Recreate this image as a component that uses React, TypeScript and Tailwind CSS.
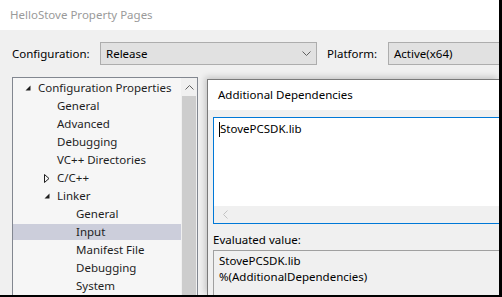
import React from 'react';

type Node = { label: string; level: number; toggle?: 'open' | 'closed'; selected?: boolean };

const nodes: Node[] = [
  { label: 'Configuration Properties', level: 0, toggle: 'open' },
  { label: 'General', level: 1 },
  { label: 'Advanced', level: 1 },
  { label: 'Debugging', level: 1 },
  { label: 'VC++ Directories', level: 1 },
  { label: 'C/C++', level: 1, toggle: 'closed' },
  { label: 'Linker', level: 1, toggle: 'open' },
  { label: 'General', level: 2 },
  { label: 'Input', level: 2, selected: true },
  { label: 'Manifest File', level: 2 },
  { label: 'Debugging', level: 2 },
  { label: 'System', level: 2 },
];

const indent = ['pl-[12px]', 'pl-[31px]', 'pl-[50px]'];

const Chevron = ({ className }: { className?: string }) => (
  <svg width="9" height="5" viewBox="0 0 9 5" className={className}>
    <path d="M0.5 0.5 L4.5 4.5 L8.5 0.5" fill="none" stroke="currentColor" strokeWidth="1" />
  </svg>
);

const TreeRow = ({ node }: { node: Node }) => (
  <div className="h-[18px] py-px">
    <div className={`h-[16px] flex items-center ${indent[node.level]} ${node.selected ? 'bg-[#cccedb]' : ''}`}>
      <span className="w-[13px] shrink-0 flex items-center">
        {node.toggle === 'open' && (
          <svg width="6" height="6" viewBox="0 0 6 6">
            <path d="M5.5 0.5 L5.5 5.5 L0.5 5.5 Z" fill="#1e1e1e" />
          </svg>
        )}
        {node.toggle === 'closed' && (
          <svg width="6" height="9" viewBox="0 0 6 9">
            <path d="M0.5 0.5 L5 4.5 L0.5 8.5 Z" fill="none" stroke="#1e1e1e" strokeWidth="1" />
          </svg>
        )}
      </span>
      <span className="text-[11.5px] text-[#1e1e1e] whitespace-nowrap">{node.label}</span>
    </div>
  </div>
);

export default function App() {
  return (
    <div
      className="w-[502px] h-[297px] overflow-hidden flex flex-col bg-[#f0f0f0] border-r-[3px] border-b-2 border-black"
      style={{ fontFamily: '"Noto Sans", "Open Sans", sans-serif' }}
    >
      {/* Title bar */}
      <div className="h-[30px] shrink-0 bg-white flex items-center pl-[10px]">
        <span className="text-[11.5px] text-[#9a9a9a]">HelloStove Property Pages</span>
      </div>

      {/* Configuration / Platform */}
      <div className="shrink-0 flex items-start pt-[12px] pl-[12px] h-[47px]">
        <span className="w-[88px] text-[11.5px] text-black leading-[23px]">Configuration:</span>
        <div className="w-[217px] h-[23px] flex items-center border border-[#adadad] bg-[#e1e1e1] pl-[5px] pr-[5px]">
          <span className="flex-1 text-[11.5px] text-black">Release</span>
          <Chevron className="text-[#606060]" />
        </div>
        <span className="ml-[10px] w-[61px] text-[11.5px] text-black leading-[23px]">Platform:</span>
        <div className="flex-1 h-[23px] flex items-center border border-[#adadad] bg-[#e1e1e1] pl-[5px] mr-[-4px]">
          <span className="text-[11.5px] text-black">Active(x64)</span>
        </div>
      </div>

      {/* Body */}
      <div className="flex-1 flex min-h-0 pl-[12px]">
        {/* Tree */}
        <div className="w-[186px] shrink-0 border border-[#828790] border-b-0 bg-[#f6f6f6] flex">
          <div className="flex-1 min-w-0 overflow-hidden pt-px">
            {nodes.map((n, i) => (
              <TreeRow key={i} node={n} />
            ))}
          </div>
          <div className="w-[16px] shrink-0 flex flex-col bg-[#f0f0f0]">
            <div className="h-[18px] flex items-center justify-center text-[#606060]">
              <Chevron className="rotate-180" />
            </div>
            <div className="flex-1 mx-px bg-[#cdcdcd]" />
          </div>
        </div>

        {/* Property panel */}
        <div className="flex-1 ml-[9px] mt-[2px] border-l border-t border-[#7a7a7a] bg-[#f0f0f0] shadow-[-2px_-2px_6px_rgba(0,0,0,0.18)] flex flex-col min-w-0">
          <div className="h-[30px] shrink-0 bg-white flex items-center pl-[10px]">
            <span className="text-[11.5px] text-black">Additional Dependencies</span>
          </div>
          <div className="pl-[5px] pt-[7px] mr-[-6px]">
            <div className="h-[107px] border border-[#0078d7] bg-white flex flex-col">
              <div className="flex-1 pl-[5px] pt-[2px] flex items-start">
                <span className="w-px h-[15px] bg-black mt-[2px]" />
                <span className="text-[11.5px] text-black leading-[18px]">StovePCSDK.lib</span>
              </div>
              <div className="h-[17px] bg-[#f0f0f0] flex items-center pl-[7px] text-[#c2c2c2]">
                <Chevron className="rotate-90" />
              </div>
            </div>
          </div>
          <div className="pl-[5px] h-[26px] flex items-end pb-[2px]">
            <span className="text-[11.5px] text-black leading-[16px]">Evaluated value:</span>
          </div>
          <div className="flex-1 ml-[5px] mr-[-6px] border-l border-t border-[#a0a0a0] bg-[#f0f0f0] pl-[5px] pt-[2px]">
            <div className="text-[11.5px] text-black leading-[16px]">StovePCSDK.lib</div>
            <div className="text-[11.5px] text-black leading-[16px]">%(AdditionalDependencies)</div>
          </div>
        </div>
      </div>
    </div>
  );
}
